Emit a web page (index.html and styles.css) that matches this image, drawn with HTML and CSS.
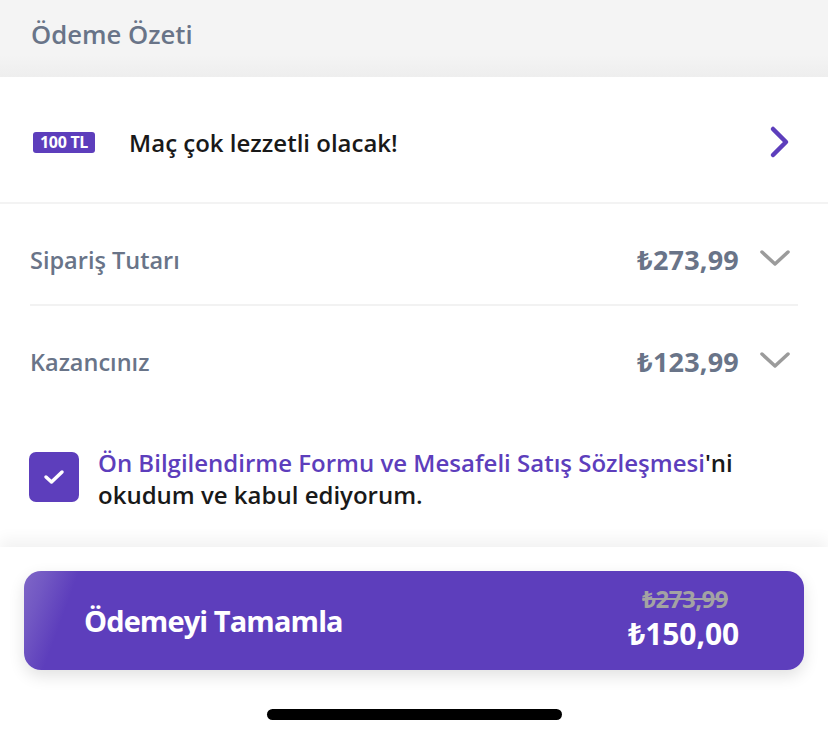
FILE: index.html
```html
<!DOCTYPE html>
<html lang="tr">
<head>
<meta charset="utf-8">
<link rel="stylesheet" href="styles.css">
</head>
<body>
<div class="page">
  <header class="head"><h1 class="head-title">Ödeme Özeti</h1></header>
  <section class="promo">
    <span class="badge">100 TL</span>
    <span class="promo-text">Maç çok lezzetli olacak!</span>
    <svg class="chev-right" width="22" height="34" viewBox="0 0 22 34"><path d="M4 4 L17 17 L4 30" fill="none" stroke="#5d3ebc" stroke-width="4.5" stroke-linecap="round" stroke-linejoin="round"/></svg>
  </section>
  <section class="summary">
    <div class="row row-first">
      <span class="row-label">Sipariş Tutarı</span>
      <span class="row-price">₺273,99</span>
      <svg class="chev-down" width="32" height="20" viewBox="0 0 32 20"><path d="M3 4 L16 16 L29 4" fill="none" stroke="#9b9b9b" stroke-width="3.5" stroke-linecap="round" stroke-linejoin="round"/></svg>
    </div>
    <div class="row row-second">
      <span class="row-label">Kazancınız</span>
      <span class="row-price">₺123,99</span>
      <svg class="chev-down" width="32" height="20" viewBox="0 0 32 20"><path d="M3 4 L16 16 L29 4" fill="none" stroke="#9b9b9b" stroke-width="3.5" stroke-linecap="round" stroke-linejoin="round"/></svg>
    </div>
    <div class="agree">
      <span class="checkbox"><svg width="24" height="20" viewBox="0 0 24 20"><path d="M4 10 L9.5 15 L20 5" fill="none" stroke="#fff" stroke-width="3.5" stroke-linecap="round" stroke-linejoin="round"/></svg></span>
      <p class="agree-text"><span class="link">Ön Bilgilendirme Formu ve Mesafeli Satış Sözleşmesi</span>'ni okudum ve kabul ediyorum.</p>
    </div>
  </section>
  <footer class="foot">
    <button class="pay">
      <span class="pay-label">Ödemeyi Tamamla</span>
      <span class="pay-prices">
        <span class="pay-old">₺273,99</span>
        <span class="pay-new">₺150,00</span>
      </span>
    </button>
    <div class="home-bar"></div>
  </footer>
</div>
</body>
</html>
```
FILE: styles.css
```css
* { box-sizing: border-box; }
html, body { margin: 0; padding: 0; background: #fff; }
body { font-family: "Open Sans", "Noto Sans", sans-serif; width: 828px; height: 737px; overflow: hidden; }
.page { display: flex; flex-direction: column; height: 737px; }

.head { height: 77px; background: linear-gradient(#f4f4f4 0, #f4f4f4 55px, #eeeeee 77px); padding: 0 31px; display: flex; align-items: flex-start; }
.head-title { margin: 17px 0 0; font-size: 25.7px; font-weight: 600; color: #697488; line-height: 36px; }

.promo { height: 127px; display: flex; align-items: center; padding: 5px 37px 0 33px; border-bottom: 2px solid #f3f3f3; }
.badge { background: #5d3ebc; color: #fff; font-weight: 700; font-size: 16px; line-height: 21px; height: 21px; padding: 0 7px; border-radius: 3px; letter-spacing: -0.3px; }
.promo-text { margin-left: 34px; font-size: 24px; font-weight: 600; color: #191919; flex: 1; }
.chev-right { display: block; }

.summary { padding: 0 30px; flex: 1; }
.row { display: flex; align-items: center; }
.row-first { padding: 40px 0 28px; border-bottom: 2px solid #f2f2f2; }
.row-second { padding: 40px 0 0; }
.row-label { flex: 1; font-size: 23.5px; font-weight: 600; color: #697488; line-height: 32px; }
.row-price { font-size: 27px; font-weight: 700; color: #697488; line-height: 32px; letter-spacing: 0.2px; }
.chev-down { margin-left: 20px; margin-right: 7px; margin-top: -4px; }

.agree { display: flex; align-items: flex-start; margin-top: 69px; }
.checkbox { width: 50px; height: 50px; border-radius: 7px; background: #5d3ebc; display: flex; align-items: center; justify-content: center; flex: none; margin-left: -1px; margin-top: 5px; }
.agree-text { margin: 0 0 0 19px; font-size: 24px; font-weight: 600; color: #191919; line-height: 32px; }
.link { color: #5d3ebc; }

.foot { height: 190px; box-shadow: 0 -8px 14px rgba(0,0,0,0.05); padding: 24px 24px 0; display: flex; flex-direction: column; align-items: center; }
.pay { width: 780px; height: 99px; border: 0; border-radius: 17px; background: linear-gradient(110deg, #7f66c7 0, #7258c3 22px, #5d3ebc 52px, #5d3ebc 100%); box-shadow: 0 6px 16px rgba(0,0,0,0.12); display: flex; align-items: center; justify-content: space-between; padding: 0 65px 0 60px; font-family: inherit; color: #fff; }
.pay-label { font-size: 29px; font-weight: 700; letter-spacing: -0.9px; }
.pay-prices { display: flex; flex-direction: column; align-items: flex-end; }
.pay-old { font-size: 24px; font-weight: 700; color: #a3a3a3; text-decoration: line-through; line-height: 26px; letter-spacing: -0.5px; margin-right: 11px; }
.pay-new { font-size: 30px; font-weight: 700; line-height: 44px; letter-spacing: -0.1px; }
.home-bar { width: 295px; height: 11px; border-radius: 6px; background: #000; margin-top: 39px; }
```
